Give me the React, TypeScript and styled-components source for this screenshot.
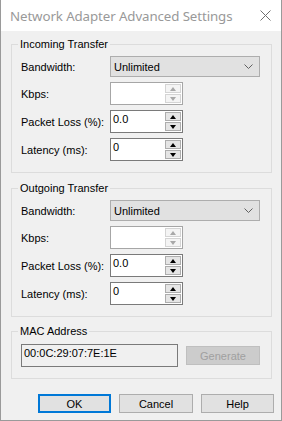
import * as React from 'react';
import styled, { createGlobalStyle } from 'styled-components';

const GlobalStyle = createGlobalStyle`
    html, body {
        margin: 0;
        padding: 0;
        background: #ffffff;
    }
    * {
        box-sizing: border-box;
    }
`;

const Window = styled.div`
    width: 282px;
    height: 421px;
    background-color: #f0f0f0;
    border: 1px solid #9a9a9a;
    border-top: none;
    display: flex;
    flex-direction: column;
    font-family: "Liberation Sans", Arial, sans-serif;
    font-size: 11px;
    color: #000;
`;
const TitleBar = styled.div`
    height: 31px;
    background-color: #ffffff;
    display: flex;
    align-items: center;
    justify-content: space-between;
    padding: 0 10px 0 9px;
`;
const Title = styled.div`
    font-family: "Noto Sans", "Open Sans", sans-serif;
    font-size: 13.3px;
    color: #999999;
    letter-spacing: -0.1px;
`;
const Body = styled.div`
    padding: 13px 9px 0 10px;
    display: flex;
    flex-direction: column;
`;
const Group = styled.div<{ $height: number; $gap: number }>`
    position: relative;
    height: ${p => p.$height}px;
    margin-bottom: ${p => p.$gap}px;
    border: 1px solid #dcdcdc;
    padding: 11px 0 0 9px;
`;
const Caption = styled.span`
    position: absolute;
    top: -7px;
    left: 6px;
    padding: 0 2px;
    background-color: #f0f0f0;
    line-height: 13px;
`;
const Rows = styled.div`
    display: flex;
    flex-direction: column;
    gap: 5px;
`;
const Row = styled.div<{ $height: number }>`
    display: grid;
    grid-template-columns: 89px auto;
    align-items: center;
    height: ${p => p.$height}px;
`;
const Combo = styled.div`
    width: 150px;
    height: 21px;
    background-color: #e1e1e1;
    border: 1px solid #adadad;
    display: flex;
    align-items: center;
    justify-content: space-between;
    padding: 0 6px 0 3px;
`;
const SpinBox = styled.div<{ $disabled?: boolean }>`
    width: 73px;
    height: 23px;
    background-color: #ffffff;
    border: 1px solid ${p => (p.$disabled ? '#a6a6a6' : '#7a7a7a')};
    display: flex;
`;
const Field = styled.div`
    flex: 1;
    padding: 2px 0 0 2px;
`;
const Spinner = styled.div`
    width: 18px;
    display: flex;
    flex-direction: column;
    gap: 1px;
    padding: 1px;
`;
const SpinButton = styled.div<{ $disabled?: boolean }>`
    flex: 1;
    border: 1px solid ${p => (p.$disabled ? '#d4d4d4' : '#adadad')};
    background-color: ${p => (p.$disabled ? '#f4f4f4' : '#e5e5e5')};
    display: flex;
    align-items: center;
    justify-content: center;
`;
const Arrow = styled.span<{ $down?: boolean; $disabled?: boolean }>`
    width: 0;
    height: 0;
    border-left: 3.5px solid transparent;
    border-right: 3.5px solid transparent;
    ${p => (p.$down ? 'border-top' : 'border-bottom')}: 4px solid ${p => (p.$disabled ? '#a8a8a8' : '#000')};
`;
const MacRow = styled.div`
    display: flex;
    gap: 8px;
    align-items: center;
    padding-top: 1px;
`;
const MacBox = styled.div`
    width: 157px;
    height: 23px;
    border: 1px solid #7a7a7a;
    background-color: #f0f0f0;
    padding: 2px 0 0 2px;
`;
const Button = styled.div<{ $width: number; $default?: boolean; $disabled?: boolean }>`
    width: ${p => p.$width}px;
    height: 19px;
    display: flex;
    align-items: center;
    justify-content: center;
    background-color: ${p => (p.$disabled ? '#cccccc' : '#e1e1e1')};
    border: ${p => (p.$default ? '2px solid #0078d7' : p.$disabled ? '1px solid #bfbfbf' : '1px solid #adadad')};
    color: ${p => (p.$disabled ? '#a0a0a0' : '#000')};
`;
const ButtonRow = styled.div`
    display: flex;
    justify-content: flex-end;
    gap: 8px;
    margin-right: -2px;
`;

const Spin = function (props: { value: string; disabled?: boolean })
{
    return (<SpinBox $disabled={props.disabled}>
        <Field>{props.value}</Field>
        <Spinner>
            <SpinButton $disabled={props.disabled}><Arrow $disabled={props.disabled} /></SpinButton>
            <SpinButton $disabled={props.disabled}><Arrow $down $disabled={props.disabled} /></SpinButton>
        </Spinner>
    </SpinBox>);
};

const Transfer = function (props: { title: string; gap: number })
{
    return (<Group $height={129} $gap={props.gap}>
        <Caption>{props.title}</Caption>
        <Rows>
            <Row $height={21}>
                <span>Bandwidth:</span>
                <Combo>
                    <span>Unlimited</span>
                    <svg width="9" height="6" viewBox="0 0 9 6">
                        <polyline points="0.5,0.5 4.5,4.5 8.5,0.5" fill="none" stroke="#606060" strokeWidth="1" />
                    </svg>
                </Combo>
            </Row>
            <Row $height={23}>
                <span>Kbps:</span>
                <Spin value="" disabled />
            </Row>
            <Row $height={23}>
                <span>Packet Loss (%):</span>
                <Spin value="0.0" />
            </Row>
            <Row $height={23}>
                <span>Latency (ms):</span>
                <Spin value="0" />
            </Row>
        </Rows>
    </Group>);
};

export default function App()
{
    return (<>
        <GlobalStyle />
        <Window>
            <TitleBar>
                <Title>Network Adapter Advanced Settings</Title>
                <svg width="11" height="11" viewBox="0 0 11 11">
                    <line x1="0.5" y1="0.5" x2="10.5" y2="10.5" stroke="#707070" strokeWidth="1" />
                    <line x1="10.5" y1="0.5" x2="0.5" y2="10.5" stroke="#707070" strokeWidth="1" />
                </svg>
            </TitleBar>
            <Body>
                <Transfer title="Incoming Transfer" gap={15} />
                <Transfer title="Outgoing Transfer" gap={14} />
                <Group $height={48} $gap={15}>
                    <Caption>MAC Address</Caption>
                    <MacRow>
                        <MacBox>00:0C:29:07:7E:1E</MacBox>
                        <Button $width={74} $disabled>Generate</Button>
                    </MacRow>
                </Group>
                <ButtonRow>
                    <Button $width={73} $default>OK</Button>
                    <Button $width={74}>Cancel</Button>
                    <Button $width={73}>Help</Button>
                </ButtonRow>
            </Body>
        </Window>
    </>);
}
